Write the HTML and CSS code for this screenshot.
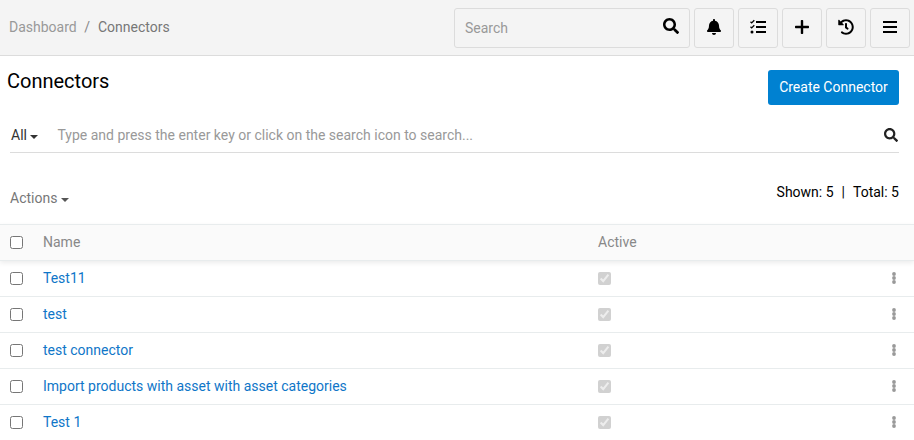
FILE: index.html
```html
<!DOCTYPE html>
<html lang="en">
<head>
<meta charset="utf-8">
<title>Connectors</title>
<link rel="stylesheet" href="styles.css">
</head>
<body>
<svg class="defs" width="0" height="0">
  <symbol id="search" viewBox="0 0 512 512"><path d="M505 442.7L405.3 343c-4.5-4.5-10.6-7-17-7H372c27.6-35.3 44-79.7 44-128C416 93.1 322.9 0 208 0S0 93.1 0 208s93.1 208 208 208c48.3 0 92.7-16.4 128-44v16.3c0 6.4 2.5 12.5 7 17l99.7 99.7c9.4 9.4 24.6 9.4 33.9 0l28.3-28.3c9.4-9.4 9.4-24.6.1-34zM208 336c-70.7 0-128-57.2-128-128 0-70.7 57.2-128 128-128 70.7 0 128 57.2 128 128 0 70.7-57.2 128-128 128z"/></symbol>
  <symbol id="dots" viewBox="0 0 6 14"><circle cx="3" cy="3" r="1.9"/><circle cx="3" cy="7" r="1.9"/><circle cx="3" cy="11" r="1.9"/></symbol>
</svg>
<header class="topbar">
  <nav class="breadcrumbs"><a>Dashboard</a><span class="slash">/</span><span class="current">Connectors</span></nav>
  <div class="tools">
    <div class="global-search"><span>Search</span><svg width="16" height="16"><use href="#search"/></svg></div>
    <button class="tool" aria-label="Notifications"><svg width="14" height="16" viewBox="0 0 448 512"><path d="M224 512c35.32 0 63.97-28.65 63.97-64H160.03c0 35.35 28.65 64 63.97 64zm215.39-149.71c-19.32-20.76-55.47-51.99-55.47-154.29 0-77.7-54.48-139.9-127.94-155.16V32c0-17.67-14.32-32-31.98-32s-31.98 14.33-31.98 32v20.84C118.56 68.1 64.08 130.3 64.08 208c0 102.3-36.15 133.53-55.47 154.29-6 6.45-8.66 14.16-8.61 21.71.11 16.4 12.98 32 32.1 32h383.8c19.12 0 32-15.6 32.1-32 .05-7.55-2.61-15.27-8.61-21.71z"/></svg></button>
    <button class="tool" aria-label="Tasks"><svg width="16" height="16" viewBox="0 0 16 16"><path d="M6 2h10v2H6zM6 7h10v2H6zM6 12h10v2H6z"/><circle cx="2" cy="13" r="1.5"/><path class="line" d="M.5 2.7l1.2 1.2 2.6-2.7M.5 7.7l1.2 1.2 2.6-2.7"/></svg></button>
    <button class="tool" aria-label="Create"><svg width="14" height="16" viewBox="0 0 14 16"><path d="M5.800 1.700q0-.7.7-.7h1q.7 0 .7.7V6.800h5.100q.7 0 .7.7v1q0 .7-.7.7H8.200v5.100q0 .7-.7.7h-1q-.7 0-.7-.7V9.200H.7Q0 9.200 0 8.500v-1Q0 6.800 .7 6.800h5.100z"/></svg></button>
    <button class="tool" aria-label="History"><svg width="16" height="16" viewBox="0 0 512 512"><path d="M504 255.531c.253 136.64-111.18 248.372-247.82 248.468-59.015.042-113.223-20.53-155.822-54.911-11.077-8.94-11.905-25.541-1.839-35.607l11.267-11.267c8.609-8.609 22.353-9.551 31.891-1.984C173.062 425.135 212.781 440 256 440c101.705 0 184-82.311 184-184 0-101.705-82.311-184-184-184-48.814 0-93.149 18.969-126.068 49.932l50.754 50.754c10.08 10.08 2.941 27.314-11.313 27.314H24c-8.837 0-16-7.163-16-16V38.627c0-14.254 17.234-21.393 27.314-11.314l49.372 49.372C129.209 34.136 189.552 8 256 8c136.81 0 247.747 110.78 248 247.531zm-180.912 78.784l9.823-12.63c8.138-10.463 6.253-25.542-4.21-33.679L288 256.349V152c0-13.255-10.745-24-24-24h-16c-13.255 0-24 10.745-24 24v135.651l65.409 50.874c10.463 8.137 25.541 6.253 33.679-4.21z"/></svg></button>
    <button class="tool" aria-label="Menu"><svg width="14" height="16" viewBox="0 0 14 16"><path d="M0 2h14v2H0zM0 7h14v2H0zM0 12h14v2H0z"/></svg></button>
  </div>
</header>
<main>
  <div class="page-header"><h1>Connectors</h1><button class="primary">Create Connector</button></div>
  <div class="filter"><span class="all">All<i class="caret"></i></span><span class="hint">Type and press the enter key or click on the search icon to search...</span><svg width="14" height="14"><use href="#search"/></svg></div>
  <div class="list-bar"><span class="actions">Actions<i class="caret"></i></span><span class="counts"><span>Shown: 5</span><span>|</span><span>Total: 5</span></span></div>
  <div class="list">
    <div class="row head"><input type="checkbox"><span>Name</span><span>Active</span></div>
    <div class="row"><input type="checkbox"><a>Test11</a><input type="checkbox" checked disabled><svg width="6" height="14"><use href="#dots"/></svg></div>
    <div class="row"><input type="checkbox"><a>test</a><input type="checkbox" checked disabled><svg width="6" height="14"><use href="#dots"/></svg></div>
    <div class="row"><input type="checkbox"><a>test connector</a><input type="checkbox" checked disabled><svg width="6" height="14"><use href="#dots"/></svg></div>
    <div class="row"><input type="checkbox"><a>Import products with asset with asset categories</a><input type="checkbox" checked disabled><svg width="6" height="14"><use href="#dots"/></svg></div>
    <div class="row"><input type="checkbox"><a>Test 1</a><input type="checkbox" checked disabled><svg width="6" height="14"><use href="#dots"/></svg></div>
  </div>
</main>
</body>
</html>
```
FILE: styles.css
```css
* { box-sizing: border-box; }
body { margin: 0; height: 440px; overflow: hidden; background: #fff; color: #000; font: 14px/20px Roboto, sans-serif; }
button { font: inherit; padding: 0; }
svg { display: block; }
.defs { display: none; }
.topbar { display: flex; justify-content: space-between; height: 56px; padding: 8px 4px 0 9px; background: #f4f4f4; border-bottom: 1px solid #dcdcdc; }
.breadcrumbs { display: flex; padding-top: 9px; color: #999; }
.breadcrumbs .slash { margin: 0 8px 0 7.500px; color: #888; }
.breadcrumbs .current { color: #777; }
.tools { display: flex; gap: 4px; }
.global-search { display: flex; justify-content: space-between; width: 236px; height: 40px; padding: 9px 10px; border: 1px solid #dcdcdc; border-radius: 3px; color: #999; }
.global-search svg { fill: #000; }
.tool { display: flex; align-items: center; justify-content: center; width: 40px; height: 40px; padding-bottom: 2px; background: none; border: 1px solid #dcdcdc; border-radius: 3px; }
.tool .line { fill: none; stroke: #000; stroke-width: 1.3; }
.page-header { display: flex; justify-content: space-between; padding: 14px 15px 0 7px; }
h1 { margin: 0; font-size: 20px; line-height: 22px; font-weight: 400; }
.primary { width: 131px; height: 35px; padding-bottom: 2px; border: 0; border-radius: 3px; background: #0081d1; color: #fff; }
.filter { display: flex; height: 34px; margin: 14px 15px 0 10px; padding: 6px 1px 0; border-bottom: 1px solid #dcdcdc; color: #999; }
.filter .all { width: 46.500px; color: #333; }
.filter .hint { flex: 1; }
.filter svg { margin-top: 3px; fill: #222; }
.caret { display: inline-block; margin-left: 3px; vertical-align: 1px; border: 4px solid transparent; border-top-color: currentColor; border-bottom: 0; }
.list-bar { display: flex; justify-content: space-between; height: 71px; padding: 29px 15px 0 10px; }
.actions { margin-top: 6px; color: #777; }
.actions .caret { margin-left: 4px; border-top-color: #555; }
.counts { display: flex; gap: 8px; }
.row { display: grid; grid-template-columns: 33px 555px 293px 6px; align-items: center; height: 36px; padding-left: 10px; border-bottom: 1px solid #e8eced; }
.row input { width: 13px; height: 13px; margin: 0; }
.row a, .row span { padding-bottom: 2px; }
.row a { color: #0f76c8; }
.row svg { fill: #999; margin-top: -2px; }
.row.head { height: 37px; border-top: 1px solid #e8eced; background: #fafafa; color: #888; box-shadow: 0 2px 5px rgba(0, 0, 0, .08); }
```
